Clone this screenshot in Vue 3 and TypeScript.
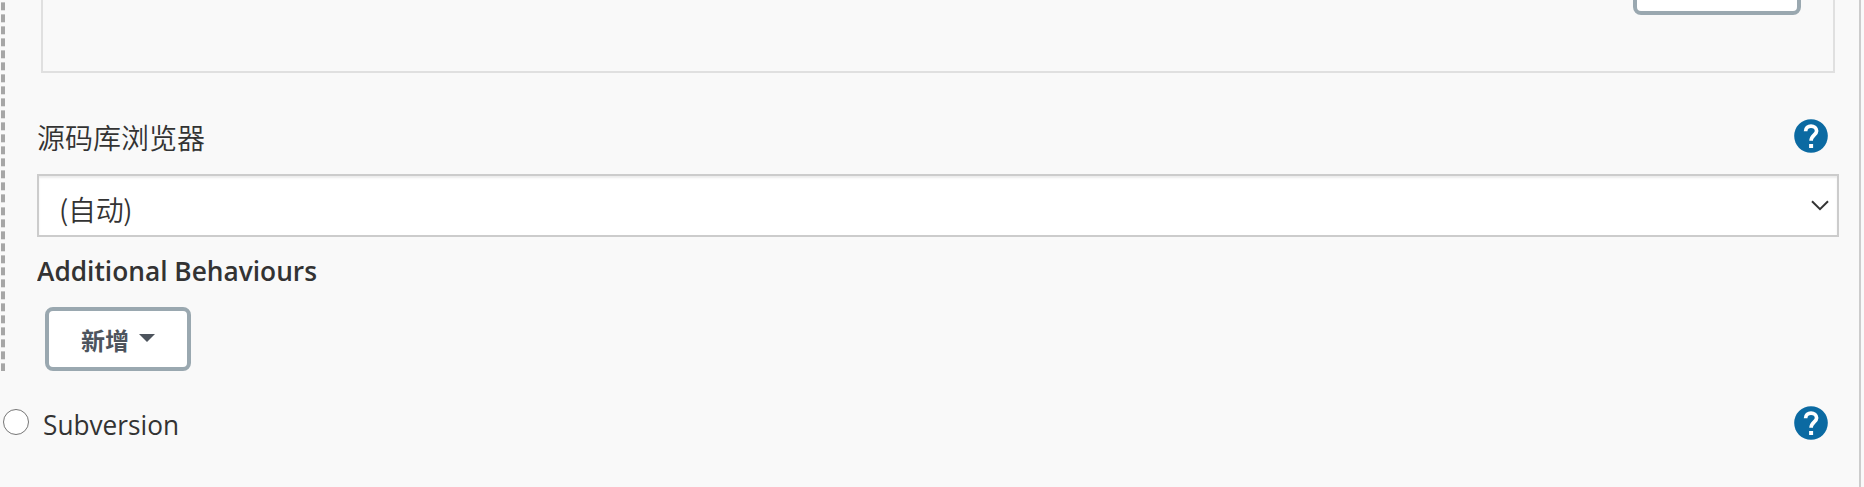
<script setup lang="ts">
const browserLabel = '源码库浏览器'
const browserValue = '(自动)'
</script>

<template>
  <main class="page">
    <div class="scm">
      <div class="repo"><button class="btn advanced" type="button" aria-label="Advanced"></button></div>
      <div class="row label-row">
        <span class="label">{{ browserLabel }}</span>
        <svg class="help" viewBox="0 0 34 34"><circle cx="17" cy="17" r="16.8" /><path d="M11.6 12.2C11.6 9 14 7.1 17 7.1S22.6 9 22.6 12C22.6 15.7 17.1 16.2 17.1 21.8" /><rect x="15.1" y="25" width="4" height="4" /></svg>
      </div>
      <div class="select">
        <span class="value">{{ browserValue }}</span>
        <svg class="chevron" viewBox="0 0 18 11"><path d="M1 1.2L9 9.2L17 1.2" /></svg>
      </div>
      <div class="heading"><svg class="fit" width="290" height="46"><text x="0" y="34" textLength="280" lengthAdjust="spacingAndGlyphs">Additional Behaviours</text></svg></div>
      <button class="btn add" type="button"><span>新增</span><i class="caret"></i></button>
    </div>
    <div class="row svn">
      <i class="radio"></i>
      <svg class="fit light" width="140" height="46"><text x="0" y="34" textLength="136" lengthAdjust="spacingAndGlyphs">Subversion</text></svg>
      <svg class="help" viewBox="0 0 34 34"><circle cx="17" cy="17" r="16.8" /><path d="M11.6 12.2C11.6 9 14 7.1 17 7.1S22.6 9 22.6 12C22.6 15.7 17.1 16.2 17.1 21.8" /><rect x="15.1" y="25" width="4" height="4" /></svg>
    </div>
  </main>
</template>

<style>
body {
  margin: 0;
  background: #f9f9f9;
}
</style>
<style scoped>
.page {
  box-sizing: border-box;
  width: 1861px;
  height: 487px;
  overflow: hidden;
  border-right: 2px solid #ccc;
  background: #f9f9f9;
  color: #333;
  font: 28px/38px "Open Sans", "Noto Sans CJK SC", sans-serif;
}
.scm {
  box-sizing: border-box;
  height: 371px;
  padding-left: 37px;
  background: repeating-linear-gradient(to bottom, transparent 0 2px, #c4c4c4 2px 3px, #a6a6a6 3px 10px, #e0e0e0 10px 11px, transparent 11px 12.03px) 1px 0 / 4px 371px no-repeat;
}
.repo {
  box-sizing: border-box;
  width: 1794px;
  height: 73px;
  margin-left: 4px;
  border: 2px solid #e0e0e0;
  border-top: 0;
  display: flex;
  justify-content: flex-end;
  padding-right: 32px;
}
.btn {
  box-sizing: border-box;
  display: flex;
  align-items: center;
  border: 4px solid #9aa8b0;
  border-radius: 8px;
  background: #fff;
  color: #4d545d;
  padding: 0;
}
.advanced {
  width: 168px;
  height: 64px;
  margin-top: -49px;
}
.row {
  display: flex;
}
.label-row {
  height: 101px;
  width: 1791px;
  justify-content: space-between;
}
.label {
  margin-top: 45px;
  font-family: "Noto Sans CJK SC", sans-serif;
  font-weight: 350;
}
.help {
  width: 34px;
  height: 34px;
  flex: none;
  fill: #0b6aa2;
}
.help path {
  fill: none;
  stroke: #fff;
  stroke-width: 3.7;
}
.help rect {
  fill: #fff;
}
.label-row .help {
  margin-top: 46px;
}
.select {
  box-sizing: border-box;
  width: 1802px;
  height: 63px;
  border: 2px solid #ccc;
  background: #fff;
  box-shadow: inset 0 2px 2px rgba(0, 0, 0, 0.075);
  display: flex;
  justify-content: space-between;
  padding: 14px 8px 0 20px;
}
.value {
  font-family: "Noto Sans CJK SC", sans-serif;
  font-weight: 350;
  letter-spacing: -0.3px;
}
.chevron {
  width: 18px;
  height: 11px;
  margin-top: 10px;
  fill: none;
  stroke: #333;
  stroke-width: 2;
}
.heading {
  height: 70px;
}
.fit {
  display: block;
  fill: #333;
  font: 600 27px "Open Sans", sans-serif;
}
.heading .fit {
  padding-top: 10px;
}
.add {
  width: 146px;
  height: 64px;
  margin-left: 8px;
  padding-left: 32px;
  gap: 10px;
  font: 700 24px/34px "Noto Sans CJK SC", sans-serif;
}
.add span {
  margin-top: 1px;
}
.caret {
  border: 8px solid transparent;
  border-top-color: #4d545d;
  border-bottom: 0;
  margin-top: -2px;
}
.svn {
  height: 116px;
}
.radio {
  box-sizing: border-box;
  width: 26px;
  height: 26px;
  margin: 38px 14px 0 3px;
  border: 1px solid #767676;
  border-radius: 50%;
  background: #fff;
}
.light {
  margin-top: 30px;
  font-weight: 400;
}
.svn .help {
  margin: 35px 0 0 1611px;
}
</style>
